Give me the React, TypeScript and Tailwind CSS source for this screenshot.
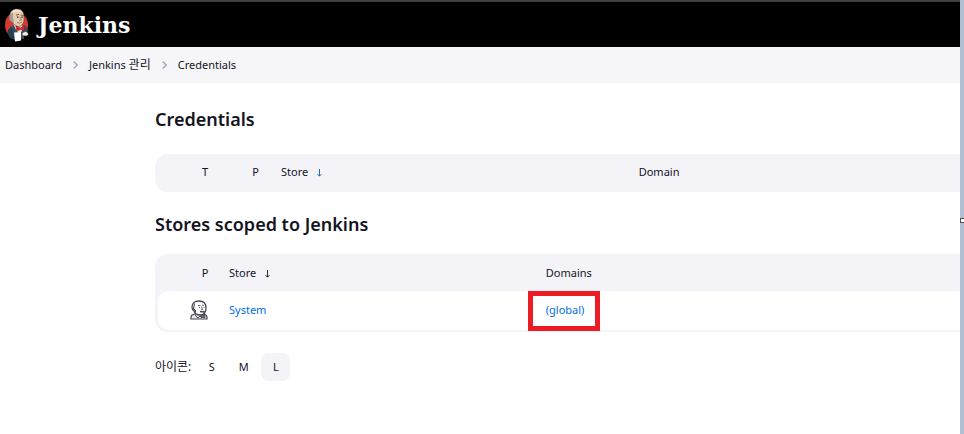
import type { ReactNode } from "react";

type SizeProps = {
    label: string,
    active?: boolean,
}

function JenkinsLogo() {
    return <svg className="h-[34px] w-[26px]" viewBox="0 0 26 34" aria-hidden="true">
        <ellipse cx="12.5" cy="17" rx="11.5" ry="13" fill="#d33833" />
        <path d="M4 22l4-4 3-1 6 3 5-2 2 4-1 4-3 2v3l-8 1-6-3-2-5z" fill="#335061" />
        <path d="M4 22l3-3 2 4 2 9-5-2-2-4z" fill="#263f50" />
        <path d="M9 15l4 2 5 0 1 4-3 5-4-4z" fill="#f7e4cd" />
        <path d="M6 7c0-4 3-6 7-6 5 0 7 3 7 8 0 4 0 6-2 8-2 2-5 2-7 0-2-1-3-3-3-4-2-1-3-3-2-6z" fill="#e6cdb2" stroke="#49372a" strokeWidth="0.6" />
        <path d="M9 3c2-2 6-2 9 1-3-1-6-1-9 1z" fill="#f7e4cd" />
        <path d="M6 6c-1 2-1 5 0 7l2 1 2 2-1-6 0-5z" fill="#a59a8e" />
        <path d="M12 7l3-0.5M16.5 7l3 0.5" stroke="#6d4c35" strokeWidth="0.9" />
        <path d="M13 9.2h1.4M17.4 9.2h1.4" stroke="#222" strokeWidth="1.2" />
        <path d="M16 9l1.4 3-2 0.4M13 14.5c2 0.8 3.5 0.8 5-0.6" fill="none" stroke="#8b6248" strokeWidth="0.8" />
        <path d="M12 18l4.5 2 4-2.5v5l-4-1-4 1.5z" fill="#d9252b" stroke="#81201f" strokeWidth="0.5" />
        <path d="M10 24.5l7-0.5v8.5l-6 1z" fill="#fff" />
        <path d="M18 25.5c2-2 4-2.5 5.5-1l1 2-2 1.5-4-0.5z" fill="#f2ece4" stroke="#49372a" strokeWidth="0.4" />
    </svg>
}

function StoreIcon() {
    return <svg className="mx-auto block h-5 w-[18px] -translate-x-[6px]" viewBox="0 0 18 20" fill="none" stroke="#454550" aria-hidden="true">
        <path d="M1 19v-2l1-2 3-1h8l3 1 1 2v2z" fill="#e6e6e8" strokeWidth="1.2" />
        <path d="M2 7c0-4 3-6 7-6s7 2 7 7c0 4-2 7-6 7-3 0-5-1-6-4-2-1-2-2-2-4z" fill="#fff" strokeWidth="1.3" />
        <path d="M4.5 3.5L3.5 9l2 1.5v2" strokeWidth="1.1" />
        <path d="M8 5.5h2.5M12 5l2 0.5M9 7.5h1M13.5 7.5h1M11.5 6.5l1 3h-1.5" strokeWidth="0.8" />
        <path d="M10 11.5l3.5 0.5 1-1" strokeWidth="1.6" />
        <path d="M5 15l3 3 2-2 2 2 3-3" strokeWidth="1" />
        <path d="M11 15.5h4v2h-4z" fill="#777780" strokeWidth="0.8" />
    </svg>
}

function Chevron() {
    return <svg className="h-2 w-[5px]" viewBox="0 0 5 8" fill="none" stroke="#9aa9c2" strokeWidth="1.4" aria-hidden="true">
        <path d="M0.7 0.5L4.2 4 0.7 7.5" />
    </svg>
}

function Arrow({ className }: { className: string }) {
    return <svg className={`ml-2 inline-block h-2 w-[7px] ${className}`} viewBox="0 0 7 8" fill="none" stroke="currentColor" strokeWidth="0.9" aria-hidden="true">
        <path d="M3.5 0v7M1.5 5.2l2 2 2-2" />
    </svg>
}

function Panel({ children }: { children: ReactNode }) {
    return <div className="overflow-hidden rounded-l-[13px] bg-[#f3f3f8] pb-0.5 pl-[3px]">
        {children}
    </div>
}

function SizeButton({ label, active }: SizeProps) {
    return <button
        className={`h-7 w-[29px] rounded-lg text-[11px] ${active ? "bg-[#f3f3f8]" : ""}`}
        aria-pressed={!!active}
    >
        {label}
    </button>
}

export default function App() {
    return <div className="flex min-h-screen bg-white font-['Noto_Sans','Noto_Sans_CJK_KR',sans-serif] text-[11px] leading-4 text-[#14141f]">
        <div className="min-w-0 flex-1">
            <header className="flex h-[47px] items-center gap-2 border-t-2 border-[#404040] bg-black pl-1">
                <JenkinsLogo />
                <a href="#" className="font-['DejaVu_Serif',serif] text-[22px] leading-8 font-bold text-white">Jenkins</a>
            </header>
            <nav aria-label="Breadcrumb" className="flex h-9 items-center gap-[11px] bg-[#f6f6f9] pl-[5px]">
                <a href="#">Dashboard</a>
                <Chevron />
                <a href="#">Jenkins <span className="text-xs">관리</span></a>
                <Chevron />
                <a href="#">Credentials</a>
            </nav>

            <main className="pt-6 pl-[155px]">
                <h1 className="text-lg leading-6 font-semibold">Credentials</h1>
                <div className="mt-[23px]">
                    <Panel>
                        <table className="w-full table-fixed border-separate border-spacing-0 text-left">
                            <thead>
                                <tr className="h-9">
                                    <th className="w-[72px] pl-[22px] text-center font-normal">T</th>
                                    <th className="w-[51px] text-center font-normal">P</th>
                                    <th className="w-[44.6%] font-normal"><a href="#">Store<Arrow className="text-[#0b6aa2]" /></a></th>
                                    <th className="font-normal">Domain</th>
                                </tr>
                            </thead>
                        </table>
                    </Panel>
                </div>

                <h2 className="mt-5 text-lg leading-6 font-semibold">Stores scoped to Jenkins</h2>
                <div className="mt-[18px]">
                    <Panel>
                        <table className="w-full table-fixed border-separate border-spacing-0 text-left">
                            <thead>
                                <tr className="h-[37px]">
                                    <th className="w-[71px] pl-[23px] text-center font-normal">P</th>
                                    <th className="w-[39.5%] font-normal"><a href="#">Store<Arrow className="" /></a></th>
                                    <th className="font-normal">Domains</th>
                                </tr>
                            </thead>
                            <tbody>
                                <tr className="h-[39px]">
                                    <td className="rounded-l-[10px] bg-white pb-0.5 pl-[23px]"><StoreIcon /></td>
                                    <td className="bg-white pb-0.5"><a href="#" className="text-[#006ee6]">System</a></td>
                                    <td className="relative bg-white pb-0.5">
                                        <a href="#" className="text-[#006ee6]">(global)</a>
                                        <span className="absolute top-0 -left-[18px] h-10 w-[72px] border-5 border-[#ed1c24]" />
                                    </td>
                                </tr>
                            </tbody>
                        </table>
                    </Panel>
                </div>

                <div className="mt-[21px] flex items-center gap-[3px]">
                    <span className="mr-[3px] text-xs">아이콘:</span>
                    <SizeButton label="S" />
                    <SizeButton label="M" />
                    <SizeButton label="L" active />
                </div>
            </main>
        </div>

        <div className="flex w-1 items-center overflow-hidden bg-[#b1bfd5]">
            <span className="mt-1.5 h-[5px] w-[5px] shrink-0 border border-[#505050] bg-white" />
        </div>
    </div>
}
